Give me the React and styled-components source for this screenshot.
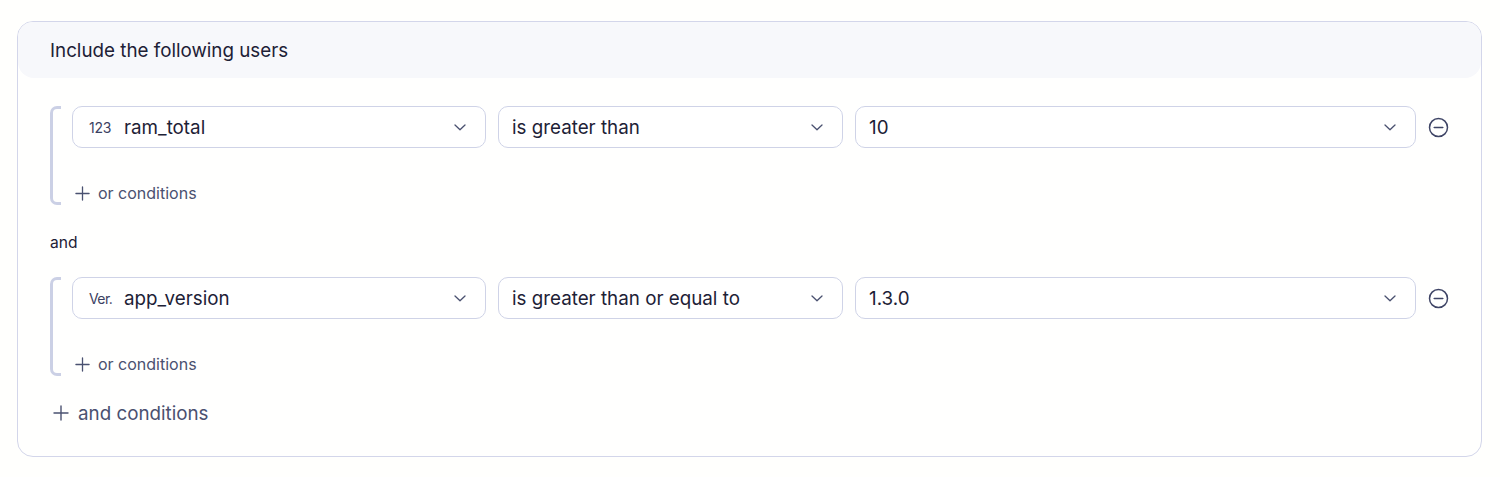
import React from 'react';
import styled, { createGlobalStyle } from 'styled-components';

const GlobalStyle = createGlobalStyle`
	body {
		margin: 0;
		background: #fffffd;
		font-family: Inter, "Noto Sans", sans-serif;
		color: #1d2136;
	}
`;

const Page = styled.div`
	padding: 21px 18px 20px 17px;
`;

const Card = styled.div`
	border: 1px solid #d3d6ea;
	border-radius: 16px;
	background: #fffffe;
	overflow: hidden;
`;

const Header = styled.div`
	background: #f7f8fb;
	height: 56px;
	display: flex;
	align-items: center;
	padding-left: 32px;
	font-size: 18.8px;
	color: #1d2136;
	border-radius: 0 0 16px 16px;
`;

const Body = styled.div`
	padding: 28px 33px 31px 32px;
`;

const Group = styled.div`
	display: flex;
	flex-direction: column;
	position: relative;
	padding-left: 22px;

	&::before {
		content: '';
		position: absolute;
		left: 0;
		top: 0;
		bottom: 0;
		width: 8px;
		border: 3px solid #cbd0e5;
		border-right: none;
		border-radius: 7px 0 0 7px;
	}
`;

const Row = styled.div`
	display: grid;
	grid-template-columns: 414px 345px 1fr 20px;
	column-gap: 12px;
	align-items: center;
`;

const Select = styled.div`
	height: 42px;
	box-sizing: border-box;
	border: 1px solid #cfd3e7;
	border-radius: 10px;
	background: #fff;
	display: flex;
	align-items: center;
	padding: 0 19px 0 ${p => (p.$prefix ? '16px' : '13px')};
	font-size: 18.8px;
	color: #1d2136;
`;

const Prefix = styled.span`
	width: 35px;
	font-size: 14px;
	color: #3b4162;
	letter-spacing: ${p => (p.$tight ? '-0.6px' : '-0.3px')};
`;

const Value = styled.span`
	flex: 1;
`;

const AddLink = styled.div`
	display: flex;
	align-items: center;
	gap: ${p => (p.$big ? '9px' : '8px')};
	color: #4a5170;
	font-size: ${p => (p.$big ? '18.8px' : '16px')};
	height: 24px;
	margin-top: ${p => (p.$big ? '25px' : '33px')};
	padding-left: 3px;
`;

const AndLabel = styled.div`
	font-size: 15.6px;
	line-height: 20px;
	padding: 28px 0 24px;
	color: #1d2136;
`;

const Chevron = () => (
	<svg width="12" height="7" viewBox="0 0 12 7" fill="none">
		<path d="M1 1l5 4.8L11 1" stroke="#4a5170" strokeWidth="1.3" strokeLinecap="round" strokeLinejoin="round" />
	</svg>
);

const Plus = ({ size }) => (
	<svg width={size} height={size} viewBox="0 0 16 16" fill="none">
		<path d="M8 1v14M1 8h14" stroke="#4a5170" strokeWidth="1.4" strokeLinecap="round" />
	</svg>
);

const MinusCircle = () => (
	<svg width="21" height="21" viewBox="0 0 21 21" fill="none">
		<circle cx="10.5" cy="10.5" r="9" stroke="#3f4566" strokeWidth="1.5" />
		<path d="M6.2 10.5h8.6" stroke="#3f4566" strokeWidth="1.5" strokeLinecap="round" />
	</svg>
);

const Condition = ({ prefix, tight, field, op, value }) => (
	<Group>
		<Row>
			<Select $prefix>
				<Prefix $tight={tight}>{prefix}</Prefix>
				<Value>{field}</Value>
				<Chevron />
			</Select>
			<Select>
				<Value>{op}</Value>
				<Chevron />
			</Select>
			<Select>
				<Value>{value}</Value>
				<Chevron />
			</Select>
			<MinusCircle />
		</Row>
		<AddLink>
			<Plus size={15} />
			or conditions
		</AddLink>
	</Group>
);

export default function App() {
	return (
		<Page>
			<GlobalStyle />
			<Card>
				<Header>Include the following users</Header>
				<Body>
					<Condition prefix="123" field="ram_total" op="is greater than" value="10" />
					<AndLabel>and</AndLabel>
					<Condition prefix="Ver." tight field="app_version" op="is greater than or equal to" value="1.3.0" />
					<AddLink $big>
						<Plus size={16} />
						and conditions
					</AddLink>
				</Body>
			</Card>
		</Page>
	);
}
